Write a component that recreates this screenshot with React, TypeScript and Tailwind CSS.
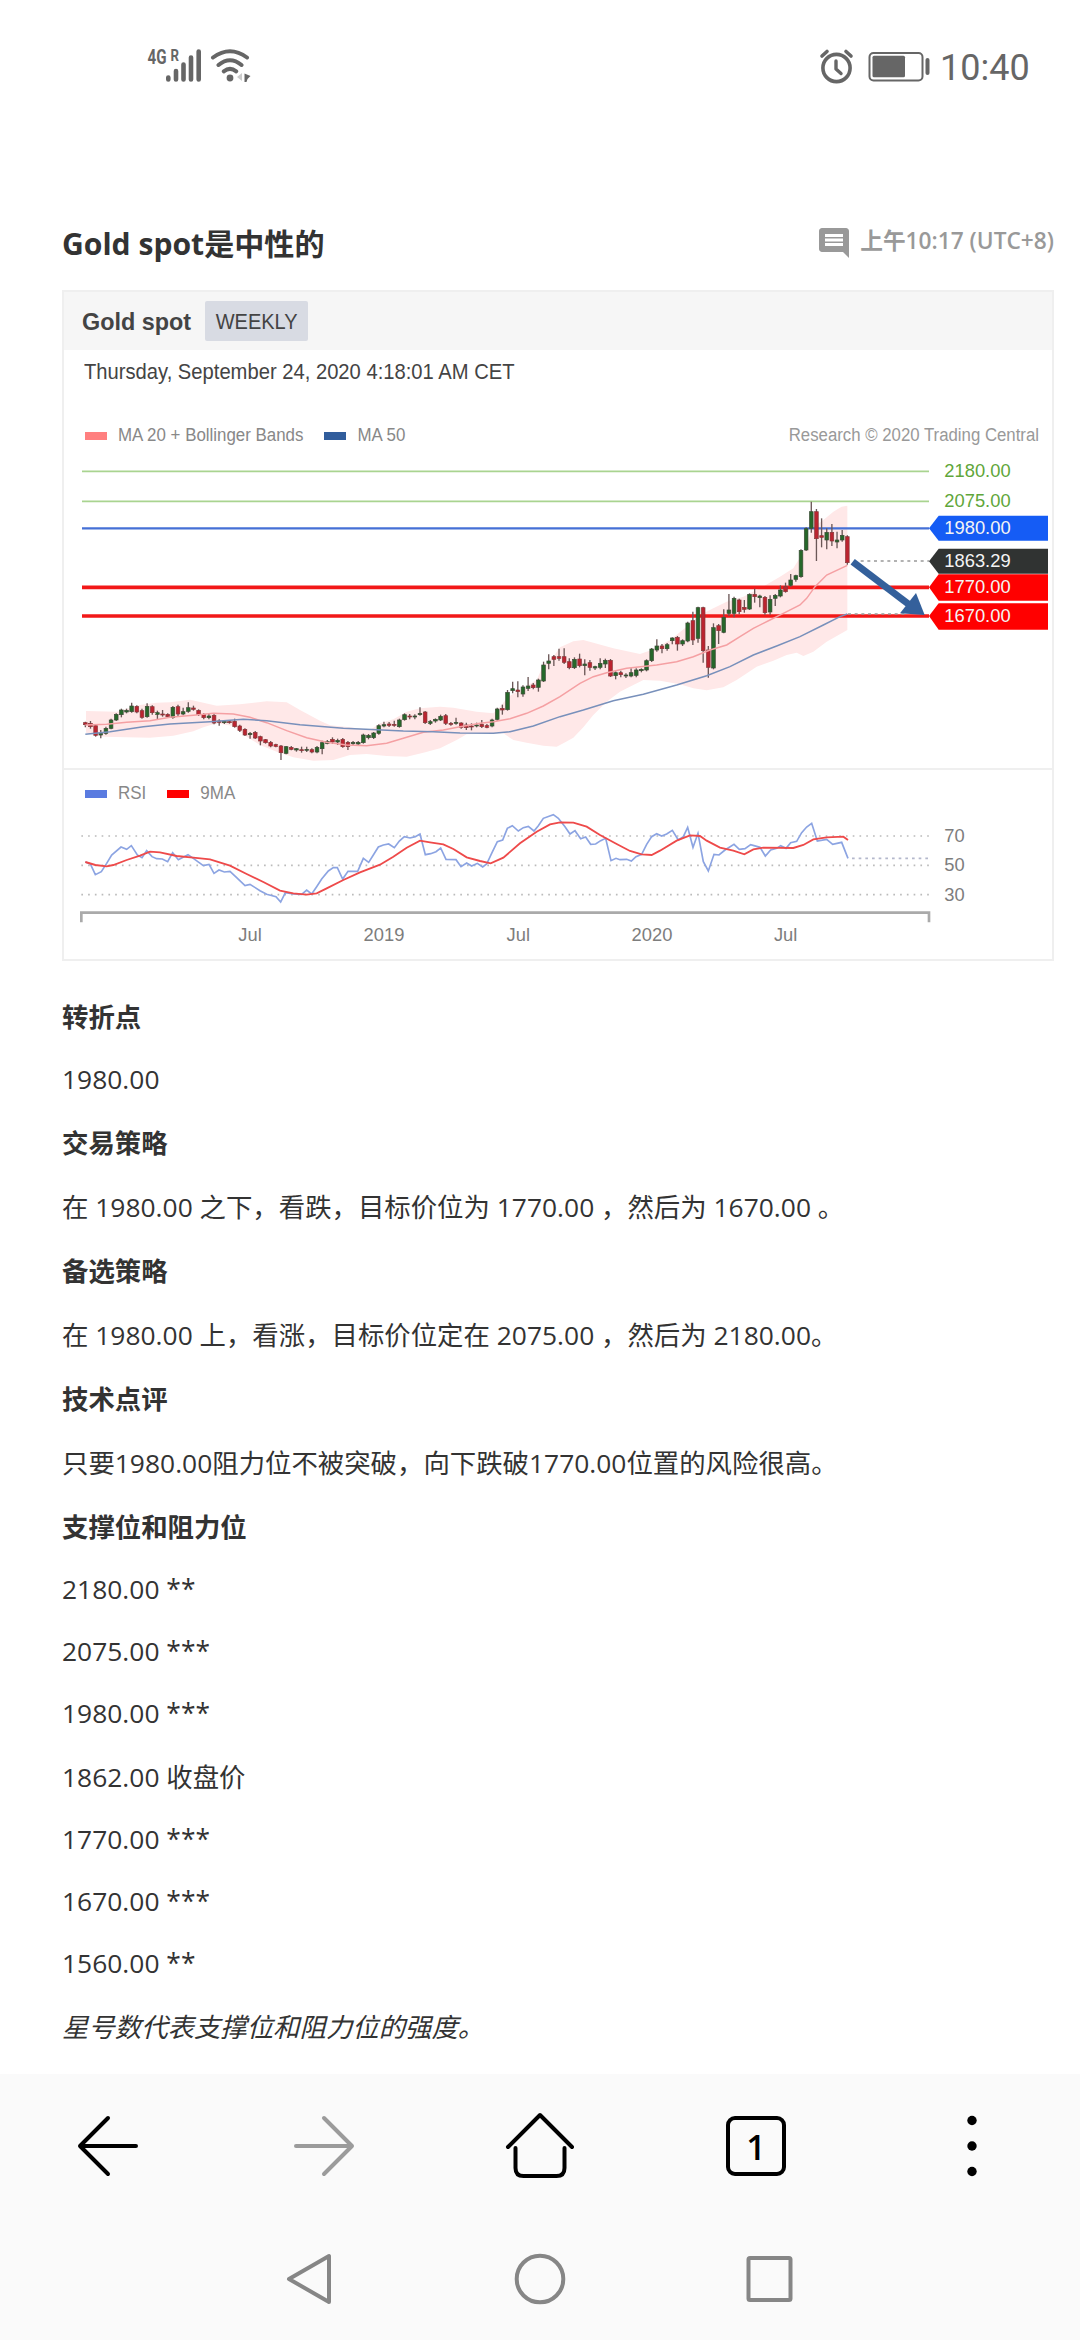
import type { ReactNode } from 'react';
import { MdComment } from 'react-icons/md';

// [body top, body bottom, high, low, rising]
type Candle = [number, number, number, number, 0 | 1];

const CANDLES: Candle[] = [
  [848, 854, 845, 862, 0], [850, 860, 843, 866, 0], [857, 886, 853, 890, 0], [880, 885, 870, 895, 1],
  [865, 880, 860, 884, 1], [840, 865, 836, 868, 1], [823, 840, 820, 843, 1], [810, 824, 806, 832, 1],
  [811, 816, 806, 820, 1], [798, 815, 788, 818, 1], [799, 816, 796, 820, 0], [812, 832, 806, 836, 0],
  [799, 830, 790, 833, 1], [800, 818, 796, 824, 0], [818, 823, 812, 838, 1], [822, 825, 810, 830, 0],
  [823, 830, 820, 834, 0], [802, 833, 798, 836, 1], [800, 822, 794, 828, 0], [815, 822, 803, 826, 1],
  [803, 814, 787, 818, 1], [804, 808, 797, 812, 0], [811, 824, 808, 828, 0], [823, 833, 820, 838, 0],
  [828, 833, 820, 838, 1], [826, 849, 822, 853, 0], [843, 847, 838, 857, 0], [844, 848, 841, 852, 1],
  [845, 848, 842, 851, 0], [844, 860, 836, 863, 0], [858, 871, 854, 876, 0], [868, 885, 865, 888, 0],
  [880, 884, 876, 896, 1], [877, 894, 873, 897, 0], [890, 903, 887, 916, 0], [899, 908, 897, 911, 0],
  [907, 918, 903, 922, 0], [914, 919, 911, 922, 0], [918, 938, 915, 960, 0], [920, 940, 918, 943, 1],
  [922, 928, 918, 931, 0], [926, 930, 924, 935, 1], [929, 932, 920, 938, 0], [928, 931, 920, 936, 1],
  [929, 936, 925, 940, 0], [922, 936, 918, 940, 1], [908, 926, 902, 943, 1], [904, 910, 900, 913, 1],
  [898, 906, 892, 912, 0], [901, 906, 896, 915, 1], [898, 920, 894, 923, 0], [907, 920, 903, 930, 0],
  [907, 911, 903, 915, 1], [907, 912, 903, 916, 1], [885, 908, 881, 911, 1], [886, 893, 882, 898, 1],
  [879, 893, 876, 897, 1], [857, 880, 853, 884, 1], [854, 858, 845, 862, 1], [852, 856, 846, 861, 0],
  [853, 856, 842, 860, 0], [840, 860, 836, 863, 1], [824, 839, 820, 842, 1], [828, 831, 822, 838, 0],
  [828, 831, 823, 838, 1], [820, 824, 802, 827, 1], [816, 848, 813, 852, 0], [845, 850, 840, 855, 1],
  [838, 843, 835, 848, 1], [829, 840, 824, 843, 1], [827, 850, 822, 855, 0], [850, 853, 846, 857, 0],
  [847, 850, 833, 854, 1], [849, 862, 847, 866, 0], [855, 863, 848, 870, 0], [858, 861, 850, 871, 0],
  [855, 858, 848, 862, 1], [853, 860, 840, 864, 0], [857, 862, 852, 865, 0], [840, 858, 836, 862, 1],
  [807, 838, 803, 842, 1], [805, 810, 794, 824, 0], [757, 809, 750, 812, 1], [746, 752, 725, 760, 1],
  [750, 755, 724, 772, 0], [741, 762, 736, 770, 1], [738, 745, 711, 753, 1], [735, 743, 729, 748, 0],
  [720, 742, 716, 755, 1], [675, 723, 665, 726, 1], [663, 670, 643, 688, 1], [650, 658, 645, 678, 0],
  [650, 655, 626, 662, 0], [650, 667, 625, 672, 0], [665, 683, 655, 688, 0], [658, 683, 652, 687, 1],
  [657, 677, 641, 682, 0], [672, 677, 658, 706, 1], [668, 682, 660, 692, 0], [680, 684, 677, 690, 1],
  [670, 682, 655, 688, 1], [661, 672, 656, 684, 1], [661, 708, 657, 711, 0], [698, 707, 694, 718, 1],
  [698, 704, 692, 712, 0], [705, 708, 700, 714, 1], [698, 708, 685, 712, 1], [690, 706, 685, 712, 1],
  [688, 692, 685, 697, 1], [662, 690, 658, 694, 1], [627, 662, 624, 666, 1], [618, 630, 598, 635, 1],
  [618, 626, 612, 640, 0], [614, 626, 609, 632, 1], [594, 602, 592, 613, 1], [592, 612, 588, 632, 0],
  [602, 612, 598, 618, 1], [549, 603, 545, 607, 1], [542, 600, 515, 615, 0], [503, 595, 500, 608, 1],
  [503, 632, 500, 668, 0], [630, 682, 618, 713, 0], [563, 684, 550, 688, 1], [557, 572, 552, 612, 0],
  [532, 577, 508, 580, 1], [510, 520, 462, 528, 1], [475, 520, 470, 532, 1], [480, 515, 476, 523, 0],
  [502, 508, 480, 518, 0], [463, 507, 460, 510, 1], [463, 470, 446, 488, 0], [468, 473, 464, 502, 1],
  [472, 518, 468, 524, 0], [478, 516, 466, 524, 1], [466, 475, 462, 498, 1], [450, 468, 436, 472, 1],
  [440, 455, 428, 458, 0], [420, 436, 402, 440, 1], [407, 418, 404, 425, 1], [331, 410, 328, 413, 1],
  [266, 330, 262, 333, 1], [215, 265, 185, 278, 1], [215, 296, 207, 363, 0], [287, 292, 235, 322, 0],
  [277, 300, 265, 328, 1], [277, 303, 252, 318, 0], [300, 306, 275, 325, 1], [286, 300, 270, 305, 1],
  [290, 368, 286, 374, 0],
];

const FIRST_X = 76;
const LAST_X = 2362;
const STEP = (LAST_X - FIRST_X) / (CANDLES.length - 1);

const BAND =
  '78,813 170,815 240,795 290,788 330,787 390,779 430,788 470,797 540,793 620,784 680,787 720,810 780,842 810,856 870,862 930,870 960,850 1000,838 1040,815 1080,805 1140,800 1180,803 1250,815 1300,820 1320,800 1345,770 1400,738 1430,720 1450,675 1480,650 1500,622 1540,604 1570,600 1600,608 1660,625 1740,642 1775,630 1830,600 1880,560 1920,525 1960,505 2000,485 2050,470 2100,445 2160,410 2200,385 2240,320 2255,265 2290,240 2320,215 2345,200 2362,197 ' +
  '2362,570 2300,605 2260,635 2230,648 2210,638 2180,645 2140,662 2090,680 2030,720 1990,742 1940,751 1900,745 1860,733 1800,722 1750,720 1720,735 1680,755 1640,785 1600,825 1570,862 1540,893 1510,910 1490,920 1450,917 1400,908 1360,900 1330,880 1220,883 1190,900 1140,925 1090,938 1040,950 980,948 920,942 870,945 820,960 760,962 700,952 650,935 600,915 560,890 520,858 470,850 430,862 400,874 340,887 270,893 200,892 130,890 78,878';

const MA20 =
  '76,855 140,853 200,847 270,842 330,832 400,826 460,820 520,822 570,832 620,848 680,872 740,893 800,907 860,915 920,917 980,910 1040,892 1090,877 1150,870 1200,860 1260,850 1300,845 1350,836 1400,820 1450,798 1500,770 1560,730 1600,710 1640,698 1700,685 1790,675 1850,665 1900,650 1950,630 2000,615 2040,590 2080,565 2130,540 2170,520 2220,495 2240,475 2265,440 2300,405 2362,376';

const MA50 =
  '76,883 150,875 250,860 330,852 450,845 550,838 620,842 720,854 850,865 950,869 1030,873 1120,875 1200,879 1300,880 1350,875 1420,858 1500,830 1570,810 1660,782 1750,763 1850,735 1940,707 2010,680 2080,645 2150,618 2220,590 2290,555 2340,530 2362,522';

const RSI =
  '76,306 91,312 106,344 124,335 140,310 155,285 183,261 200,268 214,257 232,285 246,293 260,272 276,290 290,296 307,297 323,305 338,278 355,299 384,284 400,295 430,317 447,313 462,340 477,330 493,336 510,334 530,353 555,377 570,373 600,392 620,403 648,410 662,426 676,398 700,402 725,403 740,390 755,402 770,380 785,357 805,333 820,323 832,323 848,357 864,334 893,334 910,295 926,307 940,285 955,261 970,255 986,252 1003,263 1018,243 1033,230 1050,234 1066,230 1080,222 1096,284 1112,281 1128,275 1142,264 1158,298 1188,299 1203,320 1220,309 1235,318 1252,310 1268,321 1280,312 1296,278 1312,245 1328,240 1342,205 1357,197 1375,213 1390,203 1405,199 1422,213 1435,197 1450,175 1480,164 1495,175 1515,200 1530,222 1545,212 1562,236 1577,231 1592,253 1607,252 1622,242 1637,235 1653,302 1668,295 1680,299 1700,298 1714,303 1728,290 1745,283 1760,253 1775,230 1790,221 1805,228 1820,222 1837,211 1855,240 1870,230 1883,202 1899,262 1914,220 1930,305 1945,333 1962,283 1977,285 1995,270 2022,253 2038,268 2055,266 2072,254 2100,262 2116,288 2132,270 2150,265 2162,257 2178,265 2192,248 2210,244 2225,218 2240,201 2255,190 2272,243 2300,238 2318,253 2345,247 2364,295';

const RSI_MA =
  '76,306 106,315 140,319 160,315 200,300 240,287 270,275 300,277 350,288 400,293 450,298 510,317 560,342 610,366 660,392 700,400 740,404 770,400 800,385 850,360 900,337 960,314 1000,290 1040,263 1080,242 1110,247 1150,253 1180,267 1220,292 1260,303 1292,310 1330,293 1380,250 1430,215 1470,193 1500,187 1540,188 1580,200 1620,225 1670,252 1710,273 1745,283 1775,285 1800,272 1850,242 1890,226 1920,228 1940,242 1980,263 2020,272 2053,283 2080,268 2110,263 2200,264 2230,255 2260,238 2300,232 2350,230 2364,240';

const FLAGS = [
  { label: '1980.00', y: 265, top: 227, bottom: 302, fill: '#155cf5' },
  { label: '1863.29', y: 364, top: 326, bottom: 401, fill: '#303332' },
  { label: '1770.00', y: 442, top: 403, bottom: 482, fill: '#ff0000' },
  { label: '1670.00', y: 528, top: 490, bottom: 569, fill: '#ff0000' },
];

const PriceChart = () => (
  <svg viewBox="12 30 2964 954" className="block h-[318px] w-full font-['Liberation_Sans',sans-serif]">
    <polygon points={BAND} fill="#ffe8e8" />
    <path d="M66 94H2607M66 184H2607" stroke="#a9d490" strokeWidth="5" />
    <path d="M66 265H2607" stroke="#4570d6" strokeWidth="7" />
    <path d="M66 442H2607M66 528H2607" stroke="#f21818" strokeWidth="11" />
    <path d="M2402 363H2607M2364 522H2540" stroke="#999" strokeWidth="5" strokeDasharray="9 11" />
    {CANDLES.map(([top, bottom, high, low, up], i) => {
      const x = FIRST_X + i * STEP;
      return (
        <g key={i}>
          <path d={`M${x} ${high}V${low}`} stroke="#6b5757" strokeWidth="4" />
          <rect
            x={x - 5.5}
            y={top}
            width="11"
            height={bottom - top}
            fill={up ? '#26682a' : '#bb2430'}
            stroke={up ? '#3c4a36' : '#84383a'}
            strokeWidth="2"
          />
        </g>
      );
    })}
    <polyline points={MA20} fill="none" stroke="#f5a0a3" strokeWidth="4.5" />
    <polyline points={MA50} fill="none" stroke="#7890bb" strokeWidth="4.5" />
    <path d="M2378 365L2548 494" stroke="#34609b" strokeWidth="21" />
    <polygon points="2594,525 2568,459 2520,520" fill="#34609b" />
    <text x="2653" y="111" fontSize="55" fill="#5fa63a">2180.00</text>
    <text x="2653" y="202" fontSize="55" fill="#5fa63a">2075.00</text>
    {FLAGS.map((f) => (
      <g key={f.label}>
        <path d={`M2607 ${f.y}L2636 ${f.top}H2964V${f.bottom}H2636Z`} fill={f.fill} />
        <text x="2653" y={f.y + 18} fontSize="55" fill="#f4f4f4">{f.label}</text>
      </g>
    ))}
  </svg>
);

const RsiChart = () => (
  <svg viewBox="12 135 2964 462" className="block h-[154px] w-full font-['Liberation_Sans',sans-serif]">
    <path d="M64 228H2607M64 316H2607M64 404H2607" stroke="#bbb" strokeWidth="5" strokeDasharray="5 15.3" />
    <path d="M2376 295H2607" stroke="#b4b8cc" strokeWidth="5" strokeDasharray="8 12" />
    <polyline points={RSI} fill="none" stroke="#8ca4e2" strokeWidth="5" />
    <polyline points={RSI_MA} fill="none" stroke="#ee4a4a" strokeWidth="5.5" />
    <path d="M64 487V458H2607V487" fill="none" stroke="#aaa" strokeWidth="8" />
    <g fontSize="55" fill="#7d7d7d">
      <text x="2653" y="245">70</text>
      <text x="2653" y="332">50</text>
      <text x="2653" y="422">30</text>
    </g>
    <g fontSize="55" fill="#7d7d7d" textAnchor="middle">
      <text x="570" y="543">Jul</text>
      <text x="972" y="543">2019</text>
      <text x="1375" y="543">Jul</text>
      <text x="1776" y="543">2020</text>
      <text x="2177" y="543">Jul</text>
    </g>
  </svg>
);

const Legend = ({ swatch, children }: { swatch: string; children: ReactNode }) => (
  <div className="flex items-center gap-[11px]">
    <span className={`h-[8px] w-[22px] ${swatch}`} />
    <span className="scale-y-[1.07]">{children}</span>
  </div>
);

const ChartCard = () => (
  <div className="ml-[62px] h-[671px] w-[992px] border-2 border-[#efefef] font-['Liberation_Sans',sans-serif]">
    <div className="flex h-[58px] items-center bg-[#f6f6f6] pl-[18px]">
      <span className="pt-[4px] text-[23.4px] font-bold text-[#444]">Gold spot</span>
      <span className="ml-[14px] flex h-[40px] w-[103px] items-center justify-center rounded-xs bg-[#d8dbe3] text-[20px] text-[#444]">
        <span className="scale-y-[1.1]">WEEKLY</span>
      </span>
    </div>
    <div className="flex h-[44px] items-center pl-[20px] text-[20.2px] text-[#444]">
      <span className="scale-y-[1.06]">Thursday, September 24, 2020 4:18:01 AM CET</span>
    </div>
    <div className="mt-[28px] flex h-[28px] items-center justify-between pr-[13px] pl-[21px] text-[16.9px] text-[#888]">
      <div className="flex gap-[21px]">
        <Legend swatch="bg-[#ff7f7f]">MA 20 + Bollinger Bands</Legend>
        <Legend swatch="bg-[#315d9c]">MA 50</Legend>
      </div>
      <span className="scale-y-[1.07] text-[16.8px] text-[#999]">Research © 2020 Trading Central</span>
    </div>
    <PriceChart />
    <div className="flex h-[37px] items-end gap-[21px] border-t-2 border-[#efefef] pl-[21px] text-[17px] leading-[23px] text-[#888]">
      <Legend swatch="bg-[#5a7be0]">RSI</Legend>
      <Legend swatch="bg-[#ff0000]">9MA</Legend>
    </div>
    <RsiChart />
  </div>
);

const ROWS: { text: string; kind: 'head' | 'cjk' | 'num' | 'note' }[] = [
  { text: '转折点', kind: 'head' },
  { text: '1980.00', kind: 'num' },
  { text: '交易策略', kind: 'head' },
  { text: '在 1980.00 之下，看跌，目标价位为 1770.00 ，然后为 1670.00 。', kind: 'cjk' },
  { text: '备选策略', kind: 'head' },
  { text: '在 1980.00 上，看涨，目标价位定在 2075.00 ，然后为 2180.00。', kind: 'cjk' },
  { text: '技术点评', kind: 'head' },
  { text: '只要1980.00阻力位不被突破，向下跌破1770.00位置的风险很高。', kind: 'cjk' },
  { text: '支撑位和阻力位', kind: 'head' },
  { text: '2180.00 **', kind: 'num' },
  { text: '2075.00 ***', kind: 'num' },
  { text: '1980.00 ***', kind: 'num' },
  { text: '1862.00 收盘价', kind: 'cjk' },
  { text: '1770.00 ***', kind: 'num' },
  { text: '1670.00 ***', kind: 'num' },
  { text: '1560.00 **', kind: 'num' },
  { text: '星号数代表支撑位和阻力位的强度。', kind: 'note' },
];

const ROW_CLASS = {
  head: 'h-[64px] leading-[64px] font-bold',
  cjk: 'h-[64px] leading-[64px]',
  num: 'h-[62px] leading-[60px]',
  note: 'h-[64px] leading-[64px] italic',
};

// Prices are set a little lower than the surrounding characters
const renderText = (text: string) =>
  text.split(/(\d+\.\d+)/).map((part, i) =>
    i % 2 ? (
      <span key={i} className="inline-block origin-[0_66%] scale-y-[0.93]">{part}</span>
    ) : (
      part
    )
  );

const StatusBar = () => (
  <div className="flex h-[134px] items-start justify-between pr-[50px] pl-[146px] text-[#666]">
    <div className="flex gap-[2px] pt-[44px]">
      <svg width="56" height="44" viewBox="146 44 56 44" fill="none" stroke="currentColor" strokeLinecap="round">
        <text x="147.5" y="64" fontSize="19.5" fontWeight="700" fill="currentColor" stroke="none" textLength="19" lengthAdjust="spacingAndGlyphs" className="font-[Roboto,sans-serif]">4G</text>
        <text x="170.5" y="61" fontSize="16.5" fontWeight="700" fill="currentColor" stroke="none" textLength="8.5" lengthAdjust="spacingAndGlyphs" className="font-[Roboto,sans-serif]">R</text>
        <path d="M168.3 77.5v2M176 71v8.5M183.5 64.5v15M191 57.5v22M198.7 51.5v28" strokeWidth="4.6" />
      </svg>
      <svg width="48" height="44" viewBox="204 44 48 44" fill="none" stroke="currentColor" strokeLinecap="round" strokeWidth="4">
        <path d="M213 57.5Q230 45 247 57.5M218.5 65Q230 55.5 241.5 65M223.8 71.3Q230 66.5 236.2 71.3" />
        <circle cx="230" cy="78" r="3.4" fill="currentColor" stroke="none" />
        <path d="M242 73v8l-5-4z" fill="#ccc" stroke="none" />
        <path d="M244.5 73.5l6 2.5-3 3-1 3h-2z" fill="currentColor" stroke="none" />
      </svg>
    </div>
    <div className="flex items-start pt-[44px]">
      <svg width="120" height="44" viewBox="816 44 120 44" fill="none" stroke="currentColor" strokeLinecap="round" strokeLinejoin="round">
        <circle cx="836.5" cy="68" r="13.6" strokeWidth="3.6" />
        <path d="M836 61v8l5 4.5" strokeWidth="3.4" />
        <path d="M822 56l5-4.5M851 56l-5-4.5" strokeWidth="3.6" />
        <rect x="869.5" y="53" width="53" height="27.5" rx="4" strokeWidth="2" />
        <rect x="872.5" y="55.8" width="32.5" height="21.5" rx="1.5" fill="currentColor" stroke="none" />
        <path d="M927.5 60v13" strokeWidth="4" />
      </svg>
      <span className="ml-[4px] w-[90px] pt-px font-[Roboto,sans-serif] text-[36px] leading-[46px] font-normal">10:40</span>
    </div>
  </div>
);

const BrowserBar = () => (
  <div className="grid h-[144px] grid-cols-5 place-items-center text-black">
    <svg width="72" height="72" viewBox="0 0 72 72" fill="none" stroke="currentColor" strokeWidth="4" strokeLinecap="round" strokeLinejoin="round">
      <path d="M64 36H8M36 8L8 36l28 28" />
    </svg>
    <svg width="72" height="72" viewBox="0 0 72 72" fill="none" stroke="#9b9b9b" strokeWidth="4" strokeLinecap="round" strokeLinejoin="round">
      <path d="M8 36h56M36 8l28 28-28 28" />
    </svg>
    <svg width="72" height="72" viewBox="0 0 72 72" fill="none" stroke="currentColor" strokeWidth="4" strokeLinecap="round" strokeLinejoin="round">
      <path d="M4 37L36 5l32 32M11.5 38v20q0 8 8 8h33q8 0 8-8V38" />
    </svg>
    <div className="flex h-[60px] w-[60px] items-center justify-center rounded-[9px] border-4 border-black pt-[2px] font-['Open_Sans',sans-serif] text-[34px] font-semibold">
      1
    </div>
    <svg width="72" height="72" viewBox="0 0 72 72" fill="currentColor">
      <circle cx="36" cy="10.5" r="4.7" />
      <circle cx="36" cy="36" r="4.7" />
      <circle cx="36" cy="61.5" r="4.7" />
    </svg>
  </div>
);

const SystemNav = () => (
  <div className="flex h-[122px] items-center justify-center gap-[170px]">
    <svg width="60" height="60" viewBox="0 0 60 60" fill="none" stroke="#868686" strokeWidth="4" strokeLinejoin="round">
      <path d="M49 7v46L9 30z" />
    </svg>
    <svg width="60" height="60" viewBox="0 0 60 60" fill="none" stroke="#868686" strokeWidth="4">
      <circle cx="30" cy="30" r="23.3" />
    </svg>
    <svg width="60" height="60" viewBox="0 0 60 60" fill="none" stroke="#868686" strokeWidth="4">
      <rect x="8.5" y="9" width="42" height="42" rx="1.5" />
    </svg>
  </div>
);

export default function App() {
  return (
    <div className="flex h-[2340px] w-[1080px] flex-col overflow-hidden bg-white font-['Open_Sans','Noto_Sans_CJK_SC',sans-serif] text-[#333]">
      <StatusBar />
      <div className="mt-[66px] flex h-[90px] items-center justify-between pr-[26px] pb-[3px] pl-[62px]">
        <h1 className="text-[30.1px] font-bold">Gold spot是中性的</h1>
        <div className="flex items-center gap-[8px] pb-[5px] text-[#999]">
          <MdComment size={36} className="relative top-[2px]" />
          <span className="text-[22.7px] font-semibold">上午10:17 (UTC+8)</span>
        </div>
      </div>
      <ChartCard />
      <div className="mt-[24px] flex-1 pl-[62px] text-[26.4px]">
        {ROWS.map((row, i) => (
          <p key={i} className={`whitespace-nowrap ${ROW_CLASS[row.kind]}`}>{renderText(row.text)}</p>
        ))}
      </div>
      <div className="h-[266px] bg-[#fafafa]">
        <BrowserBar />
        <SystemNav />
      </div>
    </div>
  );
}
